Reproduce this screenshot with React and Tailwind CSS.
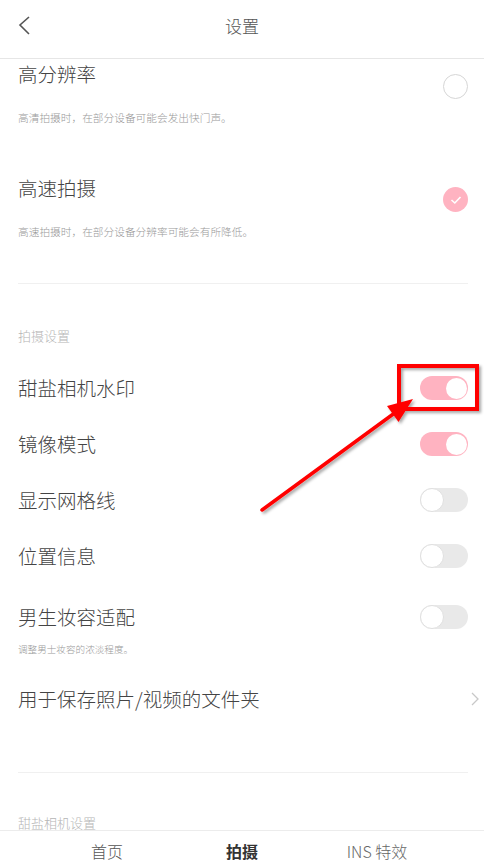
import React from 'react'

const FONT = { fontFamily: '"Noto Sans CJK SC", "Noto Sans", sans-serif' }

function Toggle({ on }) {
  return on ? (
    <div className="w-[48px] h-[24px] rounded-full bg-[#ffb3c1] flex items-center justify-end px-[1.5px]">
      <div className="w-[21px] h-[21px] rounded-full bg-white" />
    </div>
  ) : (
    <div className="w-[48px] h-[24px] rounded-full bg-[#e9e9e9] flex items-center justify-start">
      <div className="w-[24px] h-[24px] rounded-full bg-white border border-[#e0e0e0]" />
    </div>
  )
}

function ToggleRow({ label, on }) {
  return (
    <div className="h-[56px] flex items-center justify-between pl-[18px] pr-[16px]">
      <span className="text-[19.5px] leading-[24px] font-light text-[#444]">{label}</span>
      <Toggle on={on} />
    </div>
  )
}

// red annotation drawn over the screenshot
function Annotation() {
  return (
    <svg className="absolute inset-0 pointer-events-none" width="484" height="866">
      <defs>
        <filter id="sh" x="-20%" y="-20%" width="140%" height="140%">
          <feDropShadow dx="2" dy="2" stdDeviation="1.5" floodColor="#000" floodOpacity="0.35" />
        </filter>
      </defs>
      <g filter="url(#sh)">
        <rect x="399" y="366" width="78" height="43" fill="none" stroke="#ff0000" strokeWidth="4" />
        <line x1="262" y1="510" x2="396" y2="412" stroke="#ff0000" strokeWidth="3.5" strokeLinecap="round" />
        <polygon points="413,399 398.5,422 387,406" fill="#ff0000" />
      </g>
    </svg>
  )
}

export default function App() {
  return (
    <div className="relative w-[484px] h-[866px] bg-white overflow-hidden flex flex-col" style={FONT}>
      {/* Header */}
      <div className="h-[59px] shrink-0 border-b border-[#e6e6e6] relative flex items-start justify-center pt-[13px]">
        <svg className="absolute left-[14px] top-[12px]" width="20" height="26" viewBox="0 0 20 26">
          <polyline points="15,5 6,13 15,22" fill="none" stroke="#555" strokeWidth="1.6" />
        </svg>
        <span className="text-[17px] leading-[26px] font-light text-[#555]">设置</span>
      </div>

      {/* Content */}
      <div className="flex-1 overflow-hidden">
        {/* 高分辨率 */}
        <div className="flex justify-between pl-[18px] pr-[16px] pt-[3px]">
          <div>
            <div className="text-[19.5px] leading-[24px] font-light text-[#444]">高分辨率</div>
            <div className="mt-[24px] text-[10.7px] leading-[16px] font-light text-[#999]">高清拍摄时，在部分设备可能会发出快门声。</div>
          </div>
          <div className="mt-[12px] w-[25px] h-[25px] rounded-full border-[1.5px] border-[#d6d6d6]" />
        </div>

        {/* 高速拍摄 */}
        <div className="flex justify-between pl-[18px] pr-[16px] pt-[50px]">
          <div>
            <div className="text-[19.5px] leading-[24px] font-light text-[#444]">高速拍摄</div>
            <div className="mt-[24px] text-[10.7px] leading-[16px] font-light text-[#999]">高速拍摄时，在部分设备分辨率可能会有所降低。</div>
          </div>
          <div className="mt-[11px] w-[25px] h-[25px] rounded-full bg-[#ffb3c1] flex items-center justify-center">
            <svg width="12" height="10" viewBox="0 0 12 10">
              <polyline points="1.5,5 4.8,8 10.5,2" fill="none" stroke="#fff" strokeWidth="1.6" />
            </svg>
          </div>
        </div>

        <div className="mt-[43px] ml-[18px] mr-[16px] h-px bg-[#f0f0f0]" />

        <div className="mt-[44px] pl-[18px] text-[13px] leading-[16px] font-light text-[#b5b5b5]">拍摄设置</div>

        <div className="mt-[16px]">
          <ToggleRow label="甜盐相机水印" on />
          <ToggleRow label="镜像模式" on />
          <ToggleRow label="显示网格线" />
          <ToggleRow label="位置信息" />
        </div>

        {/* 男生妆容适配 */}
        <div className="pl-[18px] pr-[16px] pt-[21px]">
          <div className="flex items-center justify-between">
            <span className="text-[19.5px] leading-[24px] font-light text-[#444]">男生妆容适配</span>
            <Toggle />
          </div>
          <div className="mt-[12px] text-[9.6px] leading-[16px] font-light text-[#999]">调整男士妆容的浓淡程度。</div>
        </div>

        <div className="mt-[30px] flex items-center justify-between pl-[18px] pr-[5px]">
          <span className="text-[19.5px] leading-[24px] font-light text-[#444]">用于保存照片/视频的文件夹</span>
          <svg width="8" height="14" viewBox="0 0 8 14">
            <polyline points="1,1 7,7 1,13" fill="none" stroke="#c8c8c8" strokeWidth="1.3" />
          </svg>
        </div>

        <div className="mt-[61px] ml-[18px] mr-[16px] h-px bg-[#f0f0f0]" />

        <div className="mt-[42px] pl-[18px] text-[13px] leading-[16px] font-light text-[#b5b5b5]">甜盐相机设置</div>
      </div>

      {/* Tab bar */}
      <div className="h-[36px] shrink-0 border-t border-[#ececec] flex justify-center items-start pt-[10px] bg-white">
        <div className="w-[135px] text-center text-[16px] leading-[20px] font-light text-[#555]">首页</div>
        <div className="w-[135px] text-center text-[16px] leading-[20px] font-bold text-[#333]">拍摄</div>
        <div className="w-[135px] text-center text-[16px] leading-[20px] font-light text-[#666]">INS 特效</div>
      </div>

      <Annotation />
    </div>
  )
}
